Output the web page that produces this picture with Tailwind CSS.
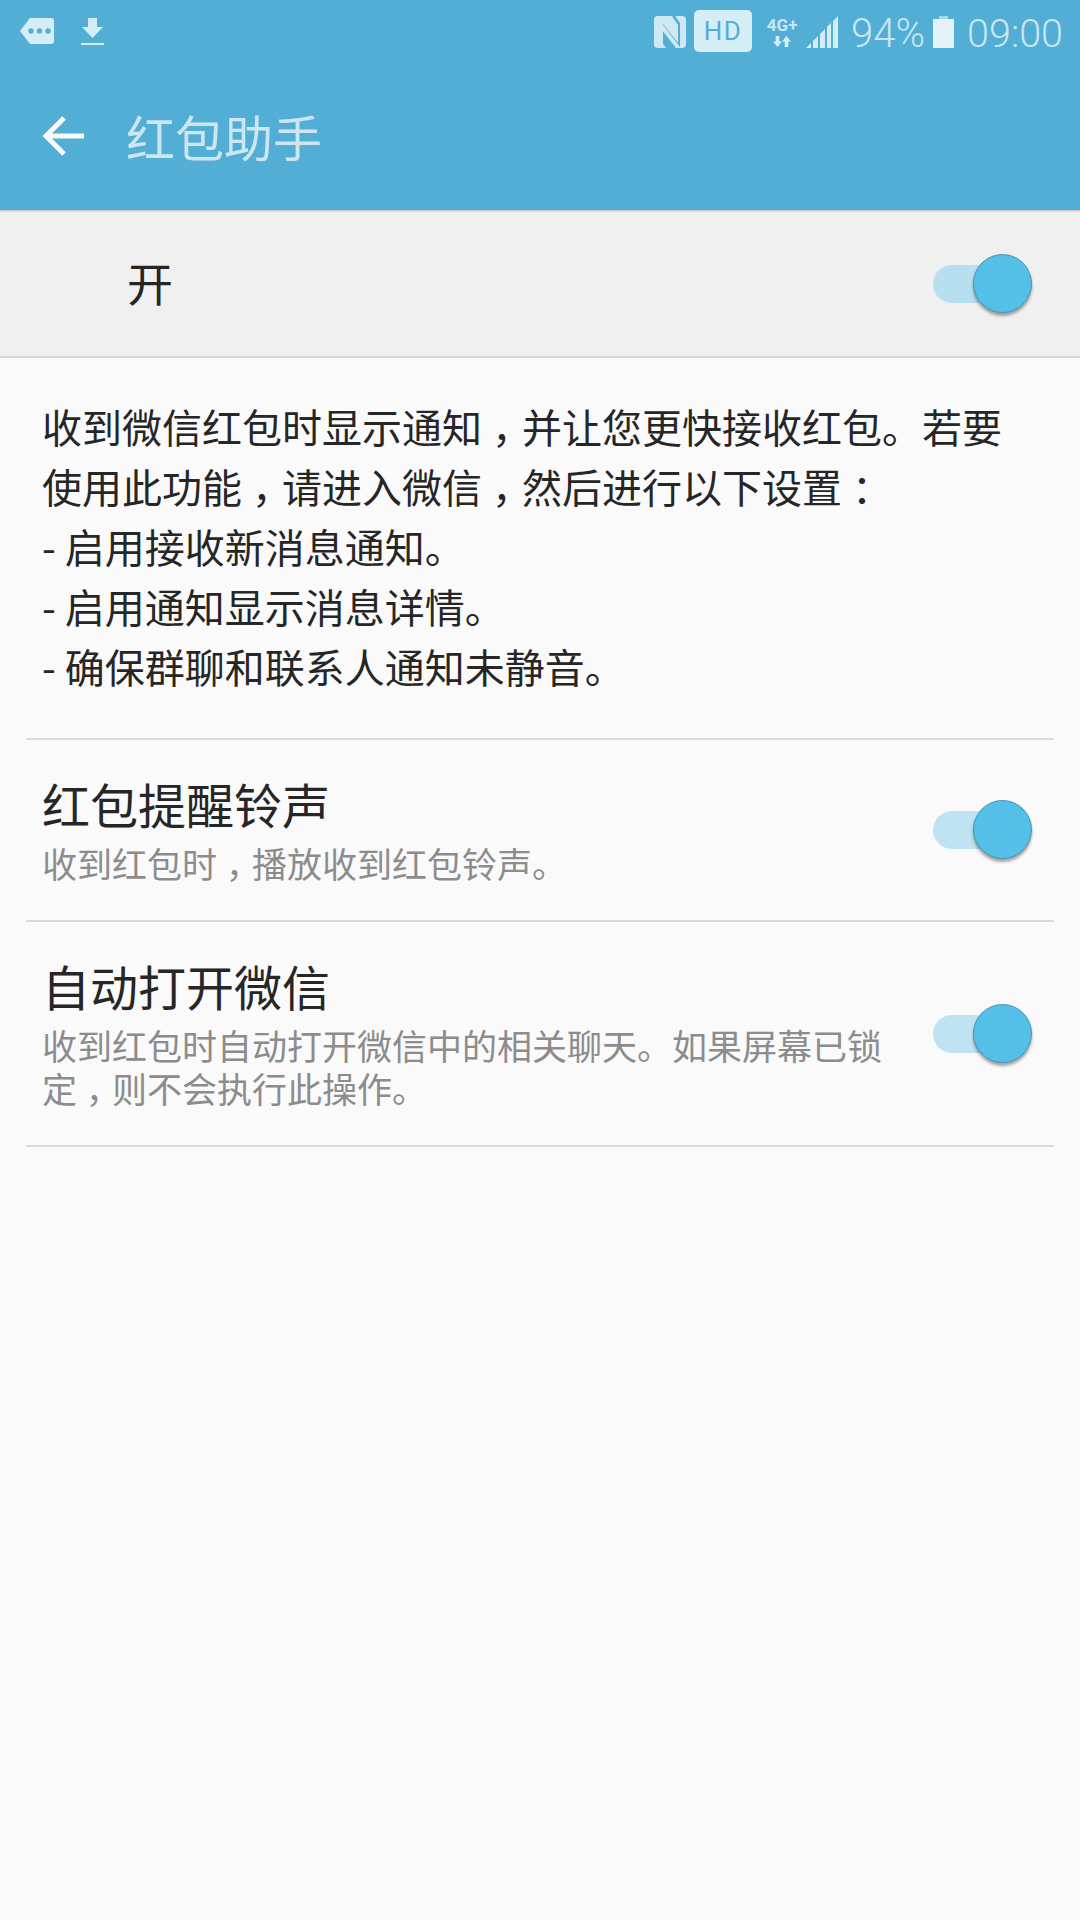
<!DOCTYPE html>
<html><head><meta charset="utf-8">
<script src="https://cdn.jsdelivr.net/npm/@tailwindcss/browser@4"></script>
</head>
<body class="w-[1080px] h-[1920px] bg-[#fafafa] overflow-hidden font-['Noto_Sans_CJK_SC','Noto_Sans',sans-serif]">
<header class="h-[210px] bg-[#52aed5] shadow-[0_1px_2px_rgba(0,0,0,0.25)] relative flex flex-col">
  <div class="h-[64px] flex items-center justify-between pl-[20px] pr-[17px] text-[#c9e6f3]">
    <div class="flex items-center gap-[27px] mb-[2px]">
      <svg class="w-[34px] h-[26px]" viewBox="0 0 34 26"><path fill="#d5edf7" d="M10 0H31a3 3 0 0 1 3 3V23a3 3 0 0 1-3 3H10L0 13Z"/><circle cx="11" cy="13" r="2.700" fill="#52aed5"/><circle cx="19.500" cy="13" r="2.700" fill="#52aed5"/><circle cx="28" cy="13" r="2.700" fill="#52aed5"/></svg>
      <svg class="w-[23px] h-[27px]" viewBox="0 0 23 27"><path fill="#d5edf7" d="M7 0H16V9H22L11.500 20 1 9H7ZM0 25H23V27H0Z"/></svg>
    </div>
    <div class="flex items-center">
      <svg class="w-[32px] h-[32px]" viewBox="0 0 32 32"><path fill="#cfe9f4" d="M4 0H18L24 9V27L9 8V28L12 32H4A4 4 0 0 1 0 28V4A4 4 0 0 1 4 0ZM21 0H28A4 4 0 0 1 32 4V28A4 4 0 0 1 28 32H22L8 14V24L6 21V5L26 31V7Z"/></svg>
      <div class="ml-[8px] mb-[2px] w-[58px] h-[42px] rounded-[5px] bg-[#d5edf7] text-[#52aed5] text-[26px] tracking-[1.500px] leading-[42px] text-center font-['Roboto',sans-serif]">HD</div>
      <div class="ml-[14px] w-[32px] flex flex-col items-center">
        <span class="text-[17px] leading-[14px] font-bold font-['Roboto',sans-serif]">4G+</span>
        <svg class="w-[18px] h-[11px] mt-[4px]" viewBox="0 0 20 12"><path fill="#d5edf7" d="M3 0H7V6H10L5 12 0 6H3ZM13 12H17V6H20L15 0 10 6H13Z"/></svg>
      </div>
      <svg class="ml-[8px] w-[32px] h-[32px]" viewBox="0 0 32 32"><path fill="#d5edf7" d="M0 32L5 27V32ZM7 32V25L12 20V32ZM14 32V18L19 13V32ZM21 32V11L25 7V32ZM27 32V5L32 0V32Z"/></svg>
      <span class="ml-[13px] mt-[3px] text-[40px] leading-[64px] font-['Roboto',sans-serif] font-light">94%</span>
      <svg class="ml-[8px] w-[21px] h-[32px]" viewBox="0 0 21 32"><path fill="#e3f3fa" d="M0 3H21V32H0Z"/><path fill="#a9d6ea" d="M6 0H15V3H6Z"/></svg>
      <span class="ml-[13px] mt-[3px] text-[39.500px] leading-[64px] font-['Roboto',sans-serif] font-light">09:00</span>
    </div>
  </div>
  <div class="flex-1 flex items-center pb-[2px]">
    <svg class="ml-[42px] w-[42px] h-[42px]" viewBox="0 0 42 42"><path d="M22 3L4 21 22 39M4 21H42" fill="none" stroke="#fafafa" stroke-width="5"/></svg>
    <h1 class="ml-[42px] text-[49px] leading-[60px] text-[#cde6f2]">红包助手</h1>
  </div>
</header>
<div class="h-[148px] bg-[#f0f0f0] border-b-2 border-[#d4d4d4] flex items-center justify-between pl-[127px] pr-[47px]">
  <span class="text-[46px] text-[#252525] mb-[3px]">开</span>
  <div class="relative w-[100px] h-[38px] mt-[2px]">
    <div class="absolute left-0 top-0 w-[70px] h-[38px] rounded-full bg-[#b8dfef]"></div>
    <div class="absolute left-[40px] top-[-11px] w-[59px] h-[59px] rounded-full bg-[#54bfe7] border border-[#4a94b4] shadow-[0_3px_3px_rgba(0,0,0,0.35)]"></div>
  </div>
</div>
<section class="mx-[26px] pl-[16px] pt-[38px] border-b-2 border-[#dadada] text-[40px] leading-[60px] text-[#262626] h-[382px] whitespace-nowrap">
  <p>收到微信红包时显示通知<span class="inline-block w-[40px] text-center [font-feature-settings:'halt']">，</span>并让您更快接收红包。若要</p>
  <p>使用此功能<span class="inline-block w-[40px] text-center [font-feature-settings:'halt']">，</span>请进入微信<span class="inline-block w-[40px] text-center [font-feature-settings:'halt']">，</span>然后进行以下设置<span class="inline-block w-[40px] text-center [font-feature-settings:'halt']">：</span></p>
  <p>- 启用接收新消息通知。</p>
  <p>- 启用通知显示消息详情。</p>
  <p>- 确保群聊和联系人通知未静音。</p>
</section>
<section class="mx-[26px] pl-[16px] pr-[21px] h-[182px] border-b-2 border-[#dadada] flex items-center justify-between">
  <div class="self-start pt-[31px]">
    <div class="text-[48px] leading-[64px] text-[#262626] whitespace-nowrap">红包提醒铃声</div>
    <div class="mt-[6px] text-[35px] leading-[44px] text-[#8c8c8c] whitespace-nowrap">收到红包时<span class="inline-block w-[35px] text-center [font-feature-settings:'halt']">，</span>播放收到红包铃声。</div>
  </div>
  <div class="relative w-[100px] h-[38px] shrink-0">
    <div class="absolute left-0 top-0 w-[70px] h-[38px] rounded-full bg-[#bfe3f2]"></div>
    <div class="absolute left-[40px] top-[-11px] w-[59px] h-[59px] rounded-full bg-[#54bfe7] border border-[#4a94b4] shadow-[0_3px_3px_rgba(0,0,0,0.35)]"></div>
  </div>
</section>
<section class="mx-[26px] pl-[16px] pr-[21px] h-[225px] border-b-2 border-[#dadada] flex items-center justify-between">
  <div class="self-start pt-[31px] w-[870px] whitespace-nowrap">
    <div class="text-[48px] leading-[64px] text-[#262626]">自动打开微信</div>
    <div class="mt-[6px] text-[35px] leading-[43px] text-[#8c8c8c]">
      <p>收到红包时自动打开微信中的相关聊天。如果屏幕已锁</p>
      <p>定<span class="inline-block w-[35px] text-center [font-feature-settings:'halt']">，</span>则不会执行此操作。</p>
    </div>
  </div>
  <div class="relative w-[100px] h-[38px] shrink-0">
    <div class="absolute left-0 top-0 w-[70px] h-[38px] rounded-full bg-[#bfe3f2]"></div>
    <div class="absolute left-[40px] top-[-11px] w-[59px] h-[59px] rounded-full bg-[#54bfe7] border border-[#4a94b4] shadow-[0_3px_3px_rgba(0,0,0,0.35)]"></div>
  </div>
</section>
</body></html>
